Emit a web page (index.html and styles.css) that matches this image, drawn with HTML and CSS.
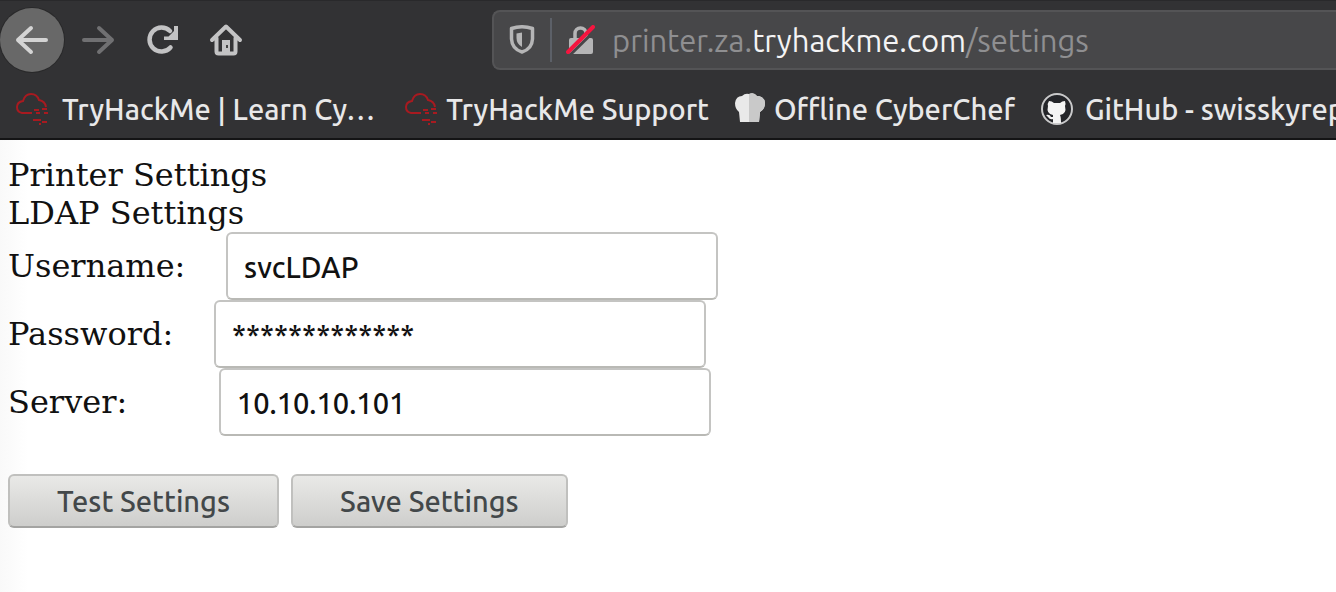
FILE: index.html
```html
<!DOCTYPE html>
<html lang="en">
<head>
<meta charset="utf-8">
<title>Printer Settings</title>
<link rel="stylesheet" href="styles.css">
</head>
<body>
<header class="chrome">
  <div class="toolbar">
    <button class="nav nav-back" type="button" aria-label="Back">
      <svg width="64" height="64" viewBox="0 0 64 64" fill="none" stroke="#d4d4d4" stroke-width="4" stroke-linecap="round" stroke-linejoin="round"><path d="M46 32H18M31 20 18 32l13 12"/></svg>
    </button>
    <button class="nav" type="button" aria-label="Forward">
      <svg width="64" height="64" viewBox="0 0 64 64" fill="none" stroke="#707072" stroke-width="4" stroke-linecap="round" stroke-linejoin="round"><path d="M20 32h28M35 20l13 12-13 12"/></svg>
    </button>
    <button class="nav" type="button" aria-label="Reload">
      <svg width="64" height="64" viewBox="0 0 64 64" fill="none" stroke="#c3c3c4" stroke-width="4.500" stroke-linecap="round"><path d="M42.500 39.500A12 12 0 1 1 42 23"/><path d="M50 18v14H36v-3.500h4.500L46 23v-5z" fill="#c3c3c4" stroke="none"/></svg>
    </button>
    <button class="nav" type="button" aria-label="Home">
      <svg width="64" height="64" viewBox="0 0 64 64" fill="none" stroke="#c3c3c4" stroke-width="4" stroke-linecap="round" stroke-linejoin="round"><path d="M20 32 34 18.500 48 32M24.500 30v13.500q0 2 2 2h15q2 0 2-2V30"/><path d="M30 32h8v13h-8z" fill="#c3c3c4" stroke="none"/><rect x="34" y="37" width="2" height="3" fill="#444" stroke="none"/></svg>
    </button>
    <div class="urlbar">
      <svg width="26" height="30" viewBox="0 0 26 30"><path d="M2.500 3.500Q13 0 23.500 3.500V14Q23 24 13 27 3 24 2.500 14z" fill="none" stroke="#b5b5b6" stroke-width="3.500" stroke-linejoin="round"/><path d="M13 7.500V22Q7.500 19 7.500 13V8.500z" fill="#b5b5b6"/></svg>
      <span class="divider"></span>
      <svg width="30" height="30" viewBox="0 0 30 30"><path d="M9 15V8.500a5.500 5.500 0 0 1 11 0V15" fill="none" stroke="#b5b5b6" stroke-width="3.500"/><rect x="3" y="13" width="24" height="16" rx="2" fill="#b5b5b6"/><path d="M4.500 29.500 30 4.500" stroke="#474749" stroke-width="3"/><path d="M2 27 27 2" stroke="#f5153f" stroke-width="4" stroke-linecap="round"/></svg>
      <span class="url" role="textbox" aria-label="Address">printer.za.<b class="host">tryhackme.com</b>/settings</span>
    </div>
  </div>
  <nav class="bookmarks">
    <a class="mark mark-first" href="#">
      <svg width="32" height="32" viewBox="0 0 32 32" fill="none" stroke="#a81a20" stroke-width="2"><path d="M16 20H6Q1 19 1 14t6-6Q9 1 15 1t8 6q6 1 7 7"/><path d="M18 17h5m3-1h5M20 20h4m4 0h4M17 27h8m1 2h5M23 31h2"/></svg>
      <span>TryHackMe | Learn Cy…</span>
    </a>
    <a class="mark" href="#">
      <svg width="32" height="32" viewBox="0 0 32 32" fill="none" stroke="#a81a20" stroke-width="2"><path d="M16 20H6Q1 19 1 14t6-6Q9 1 15 1t8 6q6 1 7 7"/><path d="M18 17h5m3-1h5M20 20h4m4 0h4M17 27h8m1 2h5M23 31h2"/></svg>
      <span>TryHackMe Support</span>
    </a>
    <a class="mark" href="#">
      <svg width="30" height="32" viewBox="0 0 30 32"><path d="M5 29 4 19Q0 16 0 10 1 3 7 3q3-3 7-2 5-2 8 2 7 0 8 7 0 6-5 9l-1 10z" fill="#e9e9e9"/><path d="M14 1q5-2 8 2 7 0 8 7 0 6-5 9l-1 10H14z" fill="#c9c9c9"/></svg>
      <span>Offline CyberChef</span>
    </a>
    <a class="mark mark-last" href="#">
      <svg width="32" height="32" viewBox="0 0 32 32"><circle cx="16" cy="16" r="15" fill="#242529" stroke="#c9c9ca" stroke-width="2"/><path d="M8 8q3 0 5 2h6q2-2 5-2 1 3 0 5 2 8-5 9 1 2 1 8h-8v-4q-3 1-5-2l-2-2q4-1 5 2h2v-2q-7-1-5-9-1-2 1-5z" fill="#f4f4f4"/></svg>
      <span>GitHub - swisskyrep</span>
    </a>
  </nav>
</header>
<main class="page">
  <div>Printer Settings</div>
  <div>LDAP Settings</div>
  <form>
    <div class="row"><label for="user">Username:&nbsp;&nbsp;&nbsp;&nbsp;</label><input class="field" id="user" type="text" value="svcLDAP"></div>
    <div class="row"><label for="pass">Password:&nbsp;&nbsp;&nbsp;&nbsp;</label><input class="field" id="pass" type="text" value="*************"></div>
    <div class="row"><label for="server">Server:&nbsp;&nbsp;&nbsp;&nbsp;&nbsp;&nbsp;&nbsp;&nbsp;&nbsp;</label><input class="field" id="server" type="text" value="10.10.10.101"></div>
    <div class="actions">
      <button class="btn" type="button">Test Settings</button>
      <button class="btn" type="button">Save Settings</button>
    </div>
  </form>
</main>
</body>
</html>
```
FILE: styles.css
```css
* { box-sizing: border-box; }
body {
  margin: 0;
  min-height: 100vh;
  display: flex;
  flex-direction: column;
  overflow-x: hidden;
  background: #fff;
}
svg { display: block; flex: none; }

.chrome {
  background: #323234;
  border-top: 1px solid #29292b;
  border-bottom: 2px solid #141415;
  font-family: Ubuntu, "Noto Sans", sans-serif;
  font-size: 29px;
  overflow: hidden;
}
.toolbar {
  display: flex;
  align-items: center;
  height: 78px;
}
.nav {
  flex: none;
  width: 64px;
  height: 64px;
  padding: 0;
  border: 0;
  border-radius: 50%;
  background: none;
}
.nav-back {
  background: #686868;
  box-shadow: 0 0 0 1px #29292a;
}
.urlbar {
  flex: 1;
  display: flex;
  align-items: center;
  height: 60px;
  margin-left: 236px;
  padding-left: 15px;
  border: 2px solid #545456;
  border-right: 0;
  border-radius: 8px 0 0 8px;
  background: #474749;
}
.divider {
  width: 2px;
  height: 44px;
  margin: 0 14px 0 15px;
  background: #5c6068;
}
.url {
  margin-left: 16px;
  color: #8f8f91;
  font-size: 31px;
  white-space: nowrap;
}
.host { font-weight: 400; color: #f4f4f5; }

.bookmarks {
  display: flex;
  align-items: center;
  gap: 26px;
  height: 59px;
  padding-left: 16px;
}
.mark {
  flex: none;
  display: flex;
  align-items: center;
  gap: 9px;
  color: #e8e8e9;
  font-weight: 500;
  text-decoration: none;
  white-space: nowrap;
}
.mark-first { gap: 14px; padding-right: 4px; }
.mark-last { gap: 12px; }

.page {
  flex: 1;
  padding: 16px 8px 8px;
  background: linear-gradient(90deg, #f9f9f9, #fff 28px);
  color: #111;
  font-family: "DejaVu Serif", serif;
  font-size: 32px;
  line-height: 38px;
}
.row { display: flex; align-items: center; }
.field {
  width: 492px;
  height: 68px;
  padding: 2px 16px 0;
  border: 2px solid #c4c4c2;
  border-bottom-color: #b9b9b5;
  border-radius: 6px;
  background: #fff;
  color: #111;
  font-family: Ubuntu, "Noto Sans", sans-serif;
  font-size: 29px;
  font-weight: 500;
}
.actions {
  display: flex;
  gap: 12px;
  padding-top: 38px;
}
.btn {
  height: 54px;
  padding: 0 47px;
  border: 2px solid #c0c0be;
  border-bottom-color: #a4a4a2;
  border-radius: 6px;
  background: linear-gradient(#e9e9e7, #cececc);
  color: #43484a;
  font-family: Ubuntu, "Noto Sans", sans-serif;
  font-size: 29px;
  font-weight: 500;
}
```
